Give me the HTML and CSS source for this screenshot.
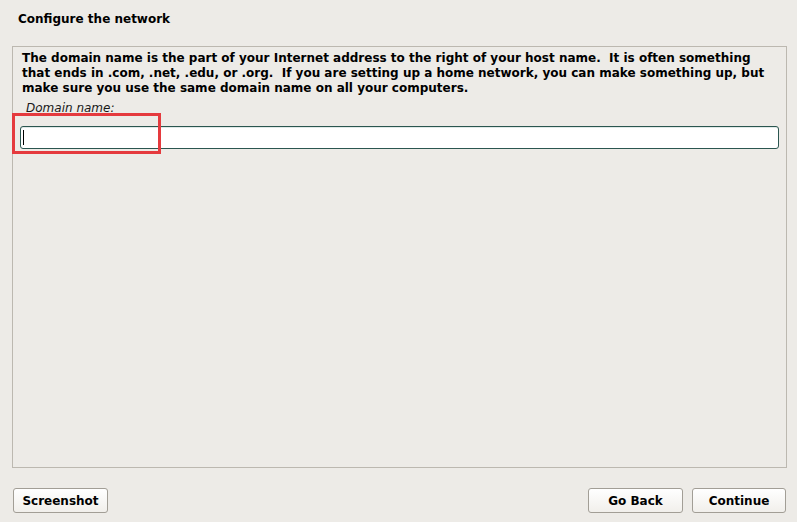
FILE: index.html
```html
<!DOCTYPE html>
<html>
<head>
<meta charset="utf-8">
<link rel="stylesheet" href="styles.css">
</head>
<body>
<div class="window">
  <div class="title">Configure the network</div>
  <div class="panel">
    <p class="desc">The domain name is the part of your Internet address to the right of your host name.&nbsp; It is often something that ends in .com, .net, .edu, or .org.&nbsp; If you are setting up a home network, you can make something up, but make sure you use the same domain name on all your computers.</p>
    <div class="label">Domain name:</div>
    <div class="field"><span class="caret"></span></div>
  </div>
  <div class="buttons">
    <button class="btn btn-shot">Screenshot</button>
    <div class="spacer"></div>
    <button class="btn btn-back">Go Back</button>
    <button class="btn btn-cont">Continue</button>
  </div>
  <div class="highlight"></div>
</div>
</body>
</html>
```
FILE: styles.css
```css
html, body {
  margin: 0;
  padding: 0;
  background: #edebe7;
}
.window {
  position: relative;
  width: 797px;
  height: 522px;
  display: flex;
  flex-direction: column;
  font-family: "DejaVu Sans", sans-serif;
  color: #000;
  box-sizing: border-box;
}
.title {
  font-weight: bold;
  font-size: 12px;
  padding: 12px 0 0 18px;
  height: 46px;
  box-sizing: border-box;
  line-height: 15px;
}
.panel {
  margin: 0 10px 0 12px;
  height: 422px;
  border: 1px solid #bcb8b0;
  box-sizing: border-box;
  padding: 4px 7px 0 9px;
}
.desc {
  margin: 0;
  font-weight: bold;
  font-size: 12px;
  line-height: 15px;
}
.label {
  font-style: italic;
  font-size: 12px;
  line-height: 15px;
  margin: 5px 0 0 4px;
  color: #1a1a1a;
}
.field {
  margin: 10px 0 0 -2px;
  height: 23px;
  border: 1px solid #2b5650;
  border-radius: 3px;
  background: #fff;
  box-sizing: border-box;
  box-shadow: inset 0 1px 0 #dfe9e7;
  display: flex;
  align-items: center;
  padding-left: 2px;
}
.caret {
  width: 1px;
  height: 15px;
  background: #000;
}
.buttons {
  display: flex;
  align-items: flex-start;
  padding: 20px 11px 0 13px;
  gap: 9px;
}
.spacer {
  flex: 1;
}
.btn {
  font-family: "DejaVu Sans", sans-serif;
  font-weight: bold;
  font-size: 12px;
  height: 25px;
  border: 1px solid #a29e96;
  border-radius: 3px;
  background: linear-gradient(#ffffff, #f1efeb);
  color: #000;
  padding: 0;
  box-sizing: border-box;
}
.btn-shot { width: 95px; }
.btn-back { width: 95px; }
.btn-cont { width: 94px; }
.highlight {
  position: absolute;
  left: 12px;
  top: 113px;
  width: 149px;
  height: 41px;
  border: 3px solid #e53a3e;
  box-sizing: border-box;
}
```
